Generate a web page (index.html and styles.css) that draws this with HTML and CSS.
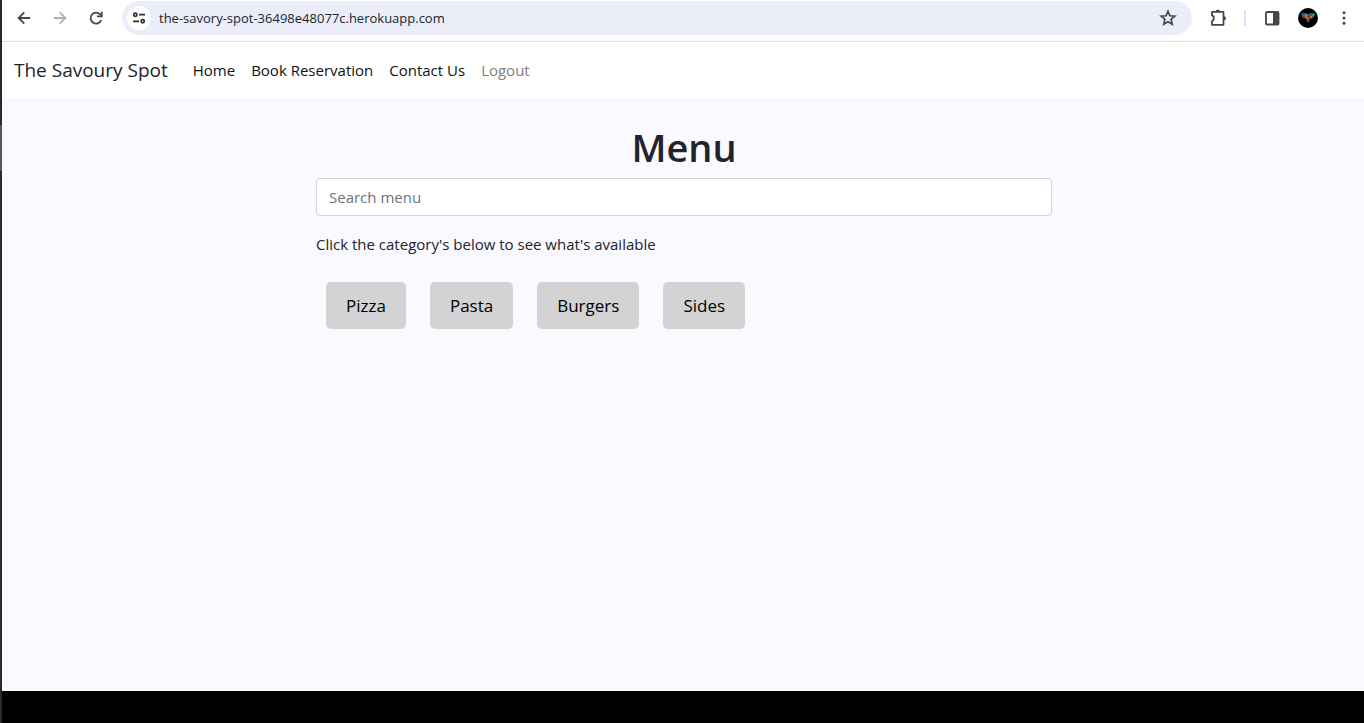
FILE: index.html
```html
<!DOCTYPE html>
<html lang="en">
<head>
  <meta charset="utf-8">
  <meta name="viewport" content="width=device-width, initial-scale=1">
  <title>The Savoury Spot</title>
  <link rel="stylesheet" href="styles.css">
</head>
<body>
  <div class="screen">
    <div class="edge"><span class="edge-thumb"></span></div>
    <div class="window">
      <header class="toolbar">
        <button class="tool" aria-label="Back">
          <svg width="16" height="16" viewBox="0 0 16 16" fill="none" stroke="#474747" stroke-width="1.8"><path d="M14.200 8H3M8.300 2.300 2.600 8l5.700 5.700"/></svg>
        </button>
        <button class="tool" aria-label="Forward" disabled>
          <svg width="16" height="16" viewBox="0 0 16 16" fill="none" stroke="#b0b0b0" stroke-width="1.800"><path d="M1.800 8H13M7.700 2.300 13.400 8l-5.700 5.700"/></svg>
        </button>
        <button class="tool" aria-label="Reload">
          <svg width="16" height="16" viewBox="0 0 16 16" fill="none" stroke="#474747" stroke-width="1.800"><path d="M13.200 10.200A5.500 5.500 0 1 1 12.300 4.500L13.800 6"/><path d="M13.700 1.700V6.400H9"/></svg>
        </button>
        <div class="address">
          <button class="site-info" aria-label="View site information">
            <svg width="14" height="14" viewBox="0 0 14 14" fill="none" stroke="#303030" stroke-width="1.700"><circle cx="3.300" cy="3.700" r="1.600"/><path d="M7 3.700h6M1 10.300h6"/><circle cx="10.700" cy="10.300" r="1.600"/></svg>
          </button>
          <input class="url" type="text" aria-label="Address" value="the-savory-spot-36498e48077c.herokuapp.com">
          <button class="bookmark" aria-label="Bookmark this tab">
            <svg width="18" height="18" viewBox="0 0 18 18" fill="none" stroke="#474747" stroke-width="1.700"><path d="M9 2.300l1.900 4.500 4.900.4-3.700 3.200 1.100 4.800L9 12.700l-4.200 2.500 1.100-4.800-3.700-3.200 4.900-.4z"/></svg>
          </button>
        </div>
        <button class="tool tool-extensions" aria-label="Extensions">
          <svg width="18" height="18" viewBox="0 0 18 18" fill="none" stroke="#474747" stroke-width="1.800" stroke-linejoin="round"><path d="M3 2.800h11.500v13H3v-3.600c2.400-.6 2.400-5.200 0-5.800z"/><path d="M6.800 2.400a2 2 0 0 1 4 0zM15 7.300a2 2 0 0 1 0 4z" fill="#474747" stroke="none"/></svg>
        </button>
        <span class="divider"></span>
        <button class="tool" aria-label="Side panel">
          <svg width="16" height="16" viewBox="0 0 16 16"><rect x="2" y="2" width="12.500" height="12.500" rx="1" fill="none" stroke="#474747" stroke-width="1.800"/><path d="M9 2h5.500v12.500H9z" fill="#474747"/></svg>
        </button>
        <button class="tool" aria-label="Profile">
          <svg width="20" height="20" viewBox="0 0 20 20"><circle cx="10" cy="10" r="10" fill="#000"/><path d="M3 6l3-1 4 1 4-1 3 1-2 4-3 1-2 4-2-4-3-1z" fill="#654832"/><path d="M3 6l3-1 2 3-2 2zM10 6l4-1-1 3h-3z" fill="#1767a4"/><path d="M7 6h2v3H7zM12 8h2v2h-2z" fill="#d77424"/><path d="M14 6h3l-2 3zM8 9h2v2H8z" fill="#22a6c9"/><path d="M9 11h3l-2 4zM5 8h2v2z" fill="#a83a24"/></svg>
        </button>
        <button class="tool" aria-label="Browser menu">
          <svg width="16" height="16" viewBox="0 0 16 16" fill="#474747"><circle cx="8" cy="2.800" r="1.500"/><circle cx="8" cy="8" r="1.500"/><circle cx="8" cy="13.200" r="1.500"/></svg>
        </button>
      </header>

      <nav class="navbar">
        <a class="brand" href="#">The Savoury Spot</a>
        <a class="nav-link" href="#">Home</a>
        <a class="nav-link" href="#">Book Reservation</a>
        <a class="nav-link" href="#">Contact Us</a>
        <a class="nav-link nav-link-muted" href="#">Logout</a>
      </nav>

      <main class="page">
        <div class="menu">
          <h1 class="title">Menu</h1>
          <input class="search" type="text" placeholder="Search menu" aria-label="Search menu">
          <p class="hint">Click the category's below to see what's available</p>
          <div class="categories">
            <button class="category">Pizza</button>
            <button class="category">Pasta</button>
            <button class="category">Burgers</button>
            <button class="category">Sides</button>
          </div>
        </div>
      </main>
      <footer class="footer"></footer>
    </div>
  </div>
</body>
</html>
```
FILE: styles.css
```css
*,
*::before,
*::after {
  box-sizing: border-box;
}

body {
  margin: 0;
  font-family: "Segoe UI", "Open Sans", "Noto Sans", sans-serif;
  font-size: 15px;
  line-height: 24px;
  color: #212529;
}

button,
input {
  font: inherit;
  color: inherit;
  border: 0;
  padding: 0;
  margin: 0;
  background: none;
}

svg {
  display: block;
}

.screen {
  display: flex;
  min-height: 100vh;
}

.edge {
  width: 2px;
  padding-top: 125px;
  background: #29292b;
}

.edge-thumb {
  display: block;
  height: 46px;
  background: #555;
}

.window {
  flex: 1;
  min-width: 0;
  display: flex;
  flex-direction: column;
  background: #f9f9ff;
}

.toolbar {
  display: flex;
  align-items: center;
  height: 42px;
  padding: 0 2px 6px 4px;
  background: #fff;
  border-bottom: 1px solid #dedfe1;
}

.tool {
  display: flex;
  align-items: center;
  justify-content: center;
  flex: none;
  width: 36px;
  height: 34px;
}

.tool-extensions {
  margin-left: 8px;
}

.address {
  flex: 1;
  display: flex;
  align-items: center;
  height: 34px;
  margin-left: 8px;
  padding: 0 12px 0 5px;
  border-radius: 17px;
  background: #ebeef8;
}

.site-info {
  display: flex;
  align-items: center;
  justify-content: center;
  flex: none;
  width: 24px;
  height: 24px;
  border-radius: 50%;
  background: #fff;
}

.url {
  flex: 1;
  min-width: 0;
  margin-left: 8px;
  font-size: 13px;
  line-height: 20px;
}

.bookmark {
  padding: 3px;
}

.divider {
  width: 2px;
  height: 16px;
  margin: 0 8px;
  background: #d3e3fd;
}

.navbar {
  display: flex;
  align-items: center;
  min-height: 56px;
  padding: 0 12px;
  background: #fff;
}

.brand {
  margin-right: 17px;
  font-size: 19px;
  line-height: 30px;
  color: #212529;
  text-decoration: none;
}

.nav-link {
  padding: 8px;
  color: #111;
  text-decoration: none;
}

.nav-link-muted {
  color: #808080;
}

.page {
  flex: 1;
  padding: 24px 12px 24px 14px;
}

.menu {
  max-width: 736px;
  margin: 0 auto;
}

.title {
  margin: 0 0 6px;
  font-size: 38px;
  font-weight: 600;
  line-height: 50px;
  text-align: center;
}

.search {
  display: block;
  width: 100%;
  height: 38px;
  padding: 6px 12px;
  border: 1px solid #ced4da;
  border-radius: 4px;
  background: #fff;
}

.search::placeholder {
  color: #6c757d;
  opacity: 1;
}

.hint {
  margin: 16px 0;
}

.categories {
  display: flex;
  flex-wrap: wrap;
  gap: 24px;
  padding: 10px;
}

.category {
  padding: 10px 20px;
  border-radius: 5px;
  background: #d3d3d3;
  font-size: 17px;
  line-height: 27px;
  color: #000;
}

.footer {
  height: 32px;
  background: #000;
}
```
